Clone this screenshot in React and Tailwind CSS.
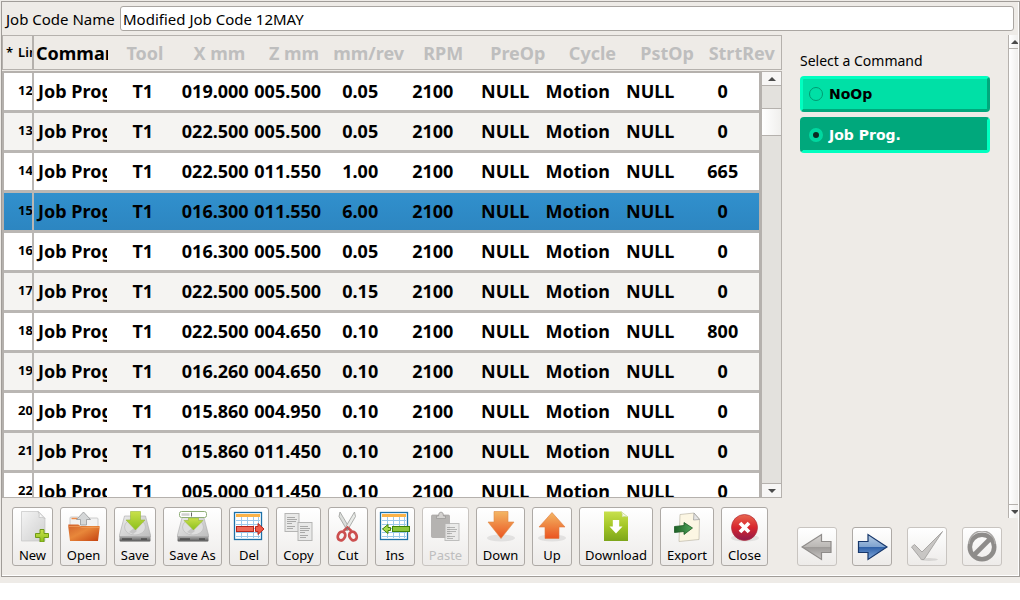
import { useState } from "react";

const headers = ["Tool", "X mm", "Z mm", "mm/rev", "RPM", "PreOp", "Cycle", "PstOp", "StrtRev"];

const rows = [
  { line: 12, x: "019.000", z: "005.500", feed: "0.05", start: "0" },
  { line: 13, x: "022.500", z: "005.500", feed: "0.05", start: "0" },
  { line: 14, x: "022.500", z: "011.550", feed: "1.00", start: "665" },
  { line: 15, x: "016.300", z: "011.550", feed: "6.00", start: "0" },
  { line: 16, x: "016.300", z: "005.500", feed: "0.05", start: "0" },
  { line: 17, x: "022.500", z: "005.500", feed: "0.15", start: "0" },
  { line: 18, x: "022.500", z: "004.650", feed: "0.10", start: "800" },
  { line: 19, x: "016.260", z: "004.650", feed: "0.10", start: "0" },
  { line: 20, x: "015.860", z: "004.950", feed: "0.10", start: "0" },
  { line: 21, x: "015.860", z: "011.450", feed: "0.10", start: "0" },
  { line: 22, x: "005.000", z: "011.450", feed: "0.10", start: "0" },
];

/* Shared gradients for the icons */
const Gradients = () => (
  <svg width="0" height="0" className="absolute" aria-hidden="true">
    <defs>
      <linearGradient id="paper" x1="0" y1="0" x2="1" y2="1">
        <stop offset="0" stopColor="#f4f4f4" />
        <stop offset="1" stopColor="#cfcfcf" />
      </linearGradient>
      <linearGradient id="green" x1="0" y1="0" x2="0" y2="1">
        <stop offset="0" stopColor="#c9e04a" />
        <stop offset="1" stopColor="#8cc01c" />
      </linearGradient>
      <linearGradient id="folder" x1="0" y1="0" x2="1" y2="1">
        <stop offset="0" stopColor="#d2622c" />
        <stop offset="0.45" stopColor="#e8873a" />
        <stop offset="1" stopColor="#c4410f" />
      </linearGradient>
      <linearGradient id="metal" x1="0" y1="0" x2="1" y2="1">
        <stop offset="0" stopColor="#ececec" />
        <stop offset="1" stopColor="#bdbdbd" />
      </linearGradient>
      <linearGradient id="front" x1="0" y1="0" x2="0" y2="1">
        <stop offset="0" stopColor="#b5b5b5" />
        <stop offset="1" stopColor="#555" />
      </linearGradient>
      <linearGradient id="orange" x1="0" y1="0" x2="0" y2="1">
        <stop offset="0" stopColor="#f3b664" />
        <stop offset="1" stopColor="#ea5420" />
      </linearGradient>
      <linearGradient id="lime" x1="0" y1="0" x2="0" y2="1">
        <stop offset="0" stopColor="#c8e04c" />
        <stop offset="0.5" stopColor="#a3c626" />
        <stop offset="1" stopColor="#7da51a" />
      </linearGradient>
      <linearGradient id="red" x1="0" y1="0" x2="0" y2="1">
        <stop offset="0" stopColor="#e8664f" />
        <stop offset="0.5" stopColor="#d8262d" />
        <stop offset="1" stopColor="#8e1a4c" />
      </linearGradient>
      <linearGradient id="leaf" x1="0" y1="0" x2="1" y2="0">
        <stop offset="0" stopColor="#1f6127" />
        <stop offset="1" stopColor="#4fa65a" />
      </linearGradient>
      <linearGradient id="blue" x1="0" y1="0" x2="0" y2="1">
        <stop offset="0" stopColor="#b9cfe6" />
        <stop offset="0.49" stopColor="#7fa3cf" />
        <stop offset="0.5" stopColor="#2d5fa6" />
        <stop offset="1" stopColor="#86ade0" />
      </linearGradient>
      <linearGradient id="gray" x1="0" y1="0" x2="0" y2="1">
        <stop offset="0" stopColor="#d6d4d2" />
        <stop offset="0.49" stopColor="#bbb8b5" />
        <stop offset="0.5" stopColor="#9c9997" />
        <stop offset="1" stopColor="#c9c6c4" />
      </linearGradient>
    </defs>
  </svg>
);

const Icon = ({ children }) => (
  <svg viewBox="0 0 32 32" className="size-8 shrink-0" fill="none" aria-hidden="true">
    {children}
  </svg>
);

const Drive = () => (
  <>
    <path d="M5.500 6h21l5 19v2H.5v-2z" fill="url(#metal)" stroke="#a9a9a9" strokeWidth="0.6" />
    <ellipse cx="16" cy="17" rx="10.500" ry="8" fill="#dedede" stroke="#bcbcbc" strokeWidth="0.7" />
    <path d="M10 22l5-4 3 3-4 3z" fill="#c6c6c6" />
    <path d="M.5 26h31v4.500q0 1-1 1h-29q-1 0-1-1z" fill="url(#front)" />
    <path d="M3 29h10M22 29h6" stroke="#333" strokeWidth="1" />
  </>
);

const Sheet = ({ x, y, w, h }) => (
  <g>
    <rect x={x} y={y} width={w} height={h} fill="#e9e9e8" stroke="#b5b5b4" />
    <path
      d={`M${x + 2} ${y + 4}h8M${x + 2} ${y + 6}h10M${x + 2} ${y + 8}h9M${x + 2} ${y + 10}h5M${x + 2} ${y + 13}h8M${x + 2} ${y + 15}h6`}
      stroke="#a9a9a8"
      strokeWidth="1"
    />
  </g>
);

const Grid = () => (
  <>
    <rect x="1.500" y="2.500" width="27" height="27" fill="#fff" stroke="#1d71a8" strokeWidth="1.300" />
    <rect x="3" y="4" width="24" height="3" fill="#fbb347" />
    <path
      d="M3 10.500h24M3 14.500h24M3 18.500h24M3 22.500h24M3 26.500h24M8.500 7v21M14.500 7v21M20.500 7v21M25.500 7v21"
      stroke="#9cc9ea"
      strokeWidth="1"
    />
  </>
);

const Shadow = () => <ellipse cx="16" cy="28" rx="14" ry="3.500" fill="#000" opacity="0.08" />;

const icons = {
  New: (
    <>
      <path d="M4.500 1.500h17l6.500 7v22.500H4.500z" fill="url(#paper)" stroke="#c4c4c4" strokeWidth="0.7" />
      <path d="M21 1.500l7 7q-3-2-6-1 1-3-1-6z" fill="#fafafa" stroke="#bdbdbd" strokeWidth="0.7" />
      <path d="M23 19.500h4v4h4.500v4H27v4.500h-4v-4.500h-4.500v-4H23z" fill="url(#green)" stroke="#6f9a17" />
    </>
  ),
  Open: (
    <>
      <path d="M2 8q0-1 1-1h7l1 1h18q1 0 1 1v8H2z" fill="#f2f2f2" stroke="#c2c2c2" strokeWidth="0.8" />
      <path d="M3.500 8.500h6" stroke="#ef8c4a" strokeWidth="1.500" />
      <path d="M.3 14.500h10l2 1.500h19.300v2L30 31H2L.3 17z" fill="url(#folder)" />
      <path d="M.6 16.500h11l2 1h17.500" stroke="#f0a060" strokeWidth="0.7" />
      <path d="M15.500 2l7 7.500h-4V15h-6V9.500h-4z" fill="#d5d7d8" stroke="#969899" strokeWidth="0.8" />
    </>
  ),
  Save: (
    <>
      <Drive />
      <path d="M11.500 1.500h10V10H26L16.500 20 7 10h4.500z" fill="url(#green)" stroke="#9ab83c" strokeWidth="0.6" />
    </>
  ),
  "Save As": (
    <>
      <Drive />
      <path d="M11.500 8h10v2.500H26L16.500 20 7 10.500h4.500z" fill="url(#green)" stroke="#9ab83c" strokeWidth="0.6" />
      <rect x="2.500" y="1.500" width="27" height="6" rx="2" fill="#fff" stroke="#8fae77" />
      <rect x="4.500" y="3.300" width="8" height="2.500" fill="#d0d0d0" />
      <path d="M14.500 2.500v4" stroke="#666" />
    </>
  ),
  Del: (
    <>
      <Grid />
      <rect x="3.500" y="16.500" width="17" height="5" fill="#ef6a58" stroke="#b8261b" />
      <path d="M22.500 16.500h2.500v-3l6 5.500-6 5.500v-3h-2.500z" fill="#ef5a48" stroke="#b8261b" />
    </>
  ),
  Copy: (
    <>
      <Sheet x={2} y={3.5} w={14} h={18} />
      <Sheet x={15} y={12.5} w={14} h={18} />
    </>
  ),
  Cut: (
    <>
      <path d="M8 2l9.500 16-2 3L7 6.500z" fill="#dcdedb" stroke="#9a9c99" strokeWidth="0.8" />
      <path d="M22.500 2L13 18l2 3 8.500-14.500z" fill="#e9ebe8" stroke="#9a9c99" strokeWidth="0.8" />
      <ellipse cx="9.500" cy="26" rx="3.500" ry="4.500" transform="rotate(25 9.500 26)" stroke="#cc4f4f" strokeWidth="2.800" />
      <ellipse cx="21" cy="26" rx="3.500" ry="4.500" transform="rotate(-25 21 26)" stroke="#cc4f4f" strokeWidth="2.800" />
      <path d="M11.500 21l4-3.500 4 3.500" stroke="#cc4f4f" strokeWidth="2.500" />
      <circle cx="15.500" cy="18.500" r="1" fill="#777" />
    </>
  ),
  Ins: (
    <>
      <Grid />
      <rect x="13.500" y="16.500" width="17" height="5" fill="#8cc63c" stroke="#3f8206" />
      <path d="M11.500 17.500H9v-3L3.500 19 9 23.500v-3h2.500z" fill="#a8dc4c" stroke="#3f8206" />
    </>
  ),
  Paste: (
    <>
      <rect x="1.500" y="5" width="18" height="22.500" rx="1" fill="#b5b3b1" stroke="#a6a4a2" strokeWidth="0.7" />
      <path d="M6.500 8.500V6h2q0-4 2.500-4t2.500 4h2v2.500z" fill="#d4d2d0" stroke="#9d9b99" strokeWidth="0.8" />
      <g opacity="0.85">
        <Sheet x={15} y={13.5} w={14} h={17} />
      </g>
    </>
  ),
  Down: (
    <>
      <Shadow />
      <path d="M9 1.500h14V12h6L16 28.500 3 12h6z" fill="url(#orange)" stroke="#df8a45" strokeWidth="0.6" />
    </>
  ),
  Up: (
    <>
      <Shadow />
      <path d="M16 2.500L29 17h-6v11.500H9V17H3z" fill="url(#orange)" stroke="#df7a40" strokeWidth="0.6" />
    </>
  ),
  Download: (
    <>
      <path d="M4 1.500h17l7 5.500v24H4z" fill="url(#lime)" />
      <path d="M21 1.500l7 5.500q-4-1-6 0 1-3-1-5.500z" fill="#f3f6e4" stroke="#b9cc76" strokeWidth="0.5" />
      <path d="M12.800 10h6.400v6.500H22.500L16 23.500 9.500 16.500h3.300z" fill="#fff" />
    </>
  ),
  Export: (
    <>
      <path d="M9 4.500l14-1.500 5.500 6-.5 20.500L8 31.500z" fill="#fcf6e3" stroke="#bdb8a8" strokeWidth="0.7" />
      <path d="M23 3l5.500 6.500-6 .5z" fill="#e4e4e4" stroke="#9b9b9b" strokeWidth="0.7" />
      <path d="M3.500 16.500l9.500-1v-3l8.500 5.500-8.500 6.500v-3l-9.500 1z" fill="url(#leaf)" stroke="#1c5a25" strokeWidth="0.8" />
    </>
  ),
  Close: (
    <>
      <Shadow />
      <circle cx="15.500" cy="17.500" r="13" fill="url(#red)" stroke="#b02c3a" strokeWidth="0.7" />
      <path d="M11 13l9 9M20 13l-9 9" stroke="#fff" strokeWidth="3.800" />
    </>
  ),
};

const tools = [
  { name: "New", width: "w-[41px]" },
  { name: "Open", width: "w-[47px]" },
  { name: "Save", width: "w-[42px]" },
  { name: "Save As", width: "w-[59px]" },
  { name: "Del", width: "w-[40px]" },
  { name: "Copy", width: "w-[45px]" },
  { name: "Cut", width: "w-[40px]" },
  { name: "Ins", width: "w-[40px]" },
  { name: "Paste", width: "w-[47px]", disabled: true },
  { name: "Down", width: "w-[49px]" },
  { name: "Up", width: "w-[40px]" },
  { name: "Download", width: "w-[74px]" },
  { name: "Export", width: "w-[54px]" },
  { name: "Close", width: "w-[47px]" },
];

const navButtons = [
  {
    name: "Previous",
    disabled: true,
    icon: <path d="M1 16L20.500 3.500v7H30v11h-9.500v7z" fill="url(#gray)" stroke="#8f8c8a" strokeWidth="1.200" />,
  },
  {
    name: "Next",
    icon: <path d="M31 16L12 3.500v7H2.500v11H12v7z" fill="url(#blue)" stroke="#17376b" strokeWidth="1.200" />,
  },
  {
    name: "Accept",
    disabled: true,
    icon: (
      <>
        <ellipse cx="18" cy="28.500" rx="9" ry="1.500" fill="#000" opacity="0.1" />
        <path d="M.5 16l3-2.500 7.500 7.500L31.500.5 13 28.500h-2.500z" fill="#c8c6c4" stroke="#a9a7a5" />
      </>
    ),
  },
  {
    name: "Cancel",
    disabled: true,
    icon: (
      <>
        <circle cx="16" cy="16" r="12.200" stroke="#8e8c8a" strokeWidth="4.600" />
        <path d="M8 24L24 8" stroke="#8e8c8a" strokeWidth="4.600" />
        <path d="M3 13a13 13 0 0 1 26 0" stroke="#aaa8a6" strokeWidth="1.500" />
      </>
    ),
  },
];

const Triangle = ({ down }) => (
  <svg viewBox="0 0 8 4" className="h-1 w-2 shrink-0" fill="#4b4b4b" aria-hidden="true">
    <path d={down ? "M0 0h8L4 4z" : "M0 4h8L4 0z"} />
  </svg>
);

const Columns = () => (
  <colgroup>
    <col className="w-[30px]" />
    <col span={10} />
  </colgroup>
);

const JobTable = ({ selected, onSelect }) => (
  <>
    <div className="h-[35px] shrink-0 border border-[#b5b1ad] pr-[2px]">
      <table className="h-full w-full table-fixed border-collapse text-lg font-bold text-[#bebebe]">
        <Columns />
        <thead>
          <tr>
            <th className="border-r-2 border-[#b5b1ad] p-0 pl-[3px] text-[13px] font-semibold text-black">
              <div className="flex gap-[5px] overflow-hidden">
                <span>*</span>
                <span>Line</span>
              </div>
            </th>
            <th className="p-0 text-left text-black">
              <div className="overflow-hidden pl-[2px] leading-6">Command</div>
            </th>
            {headers.map((header) => (
              <th key={header} className="p-0 leading-6 whitespace-nowrap">
                {header}
              </th>
            ))}
          </tr>
        </thead>
      </table>
    </div>

    <div className="mt-px flex min-h-0 flex-1 border-b border-[#b5b1ad]">
      <div className="min-w-0 flex-1 overflow-hidden border-x-2 border-t-2 border-[#b5b1ad]">
        <table className="w-full table-fixed border-separate border-spacing-0 text-lg font-bold text-black">
          <Columns />
          <tbody>
            {rows.map((row) => (
              <tr
                key={row.line}
                onClick={() => onSelect(row.line)}
                className={
                  row.line === selected
                    ? "h-10 bg-linear-to-b from-[#3190cd] to-[#2c85c0] text-center"
                    : "h-10 bg-white text-center even:bg-[#f5f4f2]"
                }
              >
                <td className="border-r-2 border-b-3 border-[#bab7b4] p-0 pb-[2px] text-left text-[13px]">
                  <div className="overflow-hidden pl-[14px]">{row.line}</div>
                </td>
                <td className="border-b-3 border-[#bab7b4] p-0 pb-[2px] text-left">
                  <div className="overflow-hidden pt-px pl-1 leading-6 whitespace-nowrap">Job Prog.</div>
                </td>
                {["T1", row.x, row.z, row.feed, "2100", "NULL", "Motion", "NULL", row.start].map((value, i) => (
                  <td key={i} className="border-b-3 border-[#bab7b4] p-0 pb-[2px] leading-6">
                    {value}
                  </td>
                ))}
              </tr>
            ))}
          </tbody>
        </table>
      </div>

      {/* Table scrollbar */}
      <div className="flex w-[21px] shrink-0 flex-col border border-b-0 border-[#b5b1ad] bg-[#e3e1dd]">
        <div className="flex h-[14px] items-center justify-center border-b border-[#b5b1ad] bg-[#f7f6f5]">
          <Triangle />
        </div>
        <div className="mt-[22px] h-7 border-y border-[#b5b1ad] bg-linear-to-r from-white to-[#f0efed]" />
        <div className="mt-auto flex h-[14px] items-center justify-center border-t border-[#b5b1ad] bg-[#f7f6f5]">
          <Triangle down />
        </div>
      </div>
    </div>
  </>
);

const Toolbar = () => (
  <div className="flex gap-[7px] pt-[9px] pb-[10px] pl-[10px]">
    {tools.map((tool) => (
      <button
        key={tool.name}
        type="button"
        disabled={tool.disabled}
        className={`${tool.width} flex h-[59px] shrink-0 flex-col items-center rounded-[3px] border border-[#aeaaa6] bg-linear-to-b from-white to-[#edebe9] pt-[2px] text-[13px] leading-[18px] whitespace-nowrap text-black disabled:border-[#c8c4c0] disabled:text-[#bebebe]`}
      >
        <Icon>{icons[tool.name]}</Icon>
        <span className="pt-1">{tool.name}</span>
      </button>
    ))}
  </div>
);

const CommandPanel = () => {
  const [command, setCommand] = useState("Job Prog.");

  return (
    <div className="flex w-[237px] shrink-0 flex-col">
      <div className="flex min-h-0 flex-1">
        <fieldset className="flex flex-1 flex-col gap-[5px] pt-4 pl-[18px]">
          <legend className="float-left text-sm leading-5 text-black">Select a Command</legend>
          {["NoOp", "Job Prog."].map((name) => (
            <label
              key={name}
              className={
                command === name
                  ? "flex h-9 w-[190px] items-center gap-[6px] rounded-[4px] border-3 border-t-[#00a87c] border-r-[#00ffc0] border-b-[#00ffc0] border-l-[#00a87c] bg-[#00a87c] pl-[6px] text-white"
                  : "flex h-9 w-[190px] items-center gap-[6px] rounded-[4px] border-3 border-t-[#00ffc0] border-r-[#00a87c] border-b-[#00a87c] border-l-[#00ffc0] bg-[#00e0a6] pl-[6px] text-black"
              }
            >
              <input
                type="radio"
                name="command"
                checked={command === name}
                onChange={() => setCommand(name)}
                className="size-[14px] appearance-none rounded-full border border-[#009b73] bg-[#00e0a6] checked:border-4 checked:border-[#00d8a0] checked:bg-[#0b2b22]"
              />
              <span className="font-['DejaVu_Sans',sans-serif] text-sm font-bold">{name}</span>
            </label>
          ))}
        </fieldset>

        {/* Panel scrollbar */}
        <div className="mr-px flex w-[10px] shrink-0 flex-col overflow-hidden border-l border-[#b5b1ad] bg-linear-to-r from-white to-[#f0efed]">
          <div className="flex h-[14px] items-center border-b border-[#b5b1ad] pl-[2px]">
            <Triangle />
          </div>
          <div className="mt-auto flex h-[14px] items-center border-t border-[#b5b1ad] pl-[2px]">
            <Triangle down />
          </div>
        </div>
      </div>

      <div className="flex gap-[15px] pt-[9px] pb-[10px] pl-[15px]">
        {navButtons.map((button) => (
          <button
            key={button.name}
            type="button"
            aria-label={button.name}
            disabled={button.disabled}
            className="flex h-[39px] w-10 items-center justify-center rounded-[3px] border border-[#aeaaa6] bg-linear-to-b from-white to-[#edebe9] disabled:border-[#c8c4c0]"
          >
            <Icon>{button.icon}</Icon>
          </button>
        ))}
      </div>
    </div>
  );
};

export default function App() {
  const [jobName, setJobName] = useState("Modified Job Code 12MAY");
  const [selected, setSelected] = useState(15);

  return (
    <div className="flex h-screen flex-col overflow-hidden bg-white pb-[17px] font-['Noto_Sans',sans-serif]">
      <Gradients />
      <div className="flex min-h-0 flex-1 flex-col bg-[#eeebe7] pt-px pb-[6px] pl-px">
        <div className="flex min-h-0 flex-1 flex-col border border-[#a09c98] shadow-[inset_-1px_-1px_0_#fff]">
          <div className="flex items-center gap-[6px] pt-1 pr-[5px] pb-1 pl-1">
            <label htmlFor="job-name" className="w-[108px] shrink-0 text-[15px] leading-5 whitespace-nowrap text-black">
              Job Code Name
            </label>
            <input
              id="job-name"
              type="text"
              value={jobName}
              onChange={(e) => setJobName(e.target.value)}
              className="h-[25px] min-w-0 flex-1 rounded-[3px] border border-[#aaa6a2] bg-white px-[2px] text-[15px] leading-5 text-black"
            />
          </div>

          <div className="flex min-h-0 flex-1">
            <div className="flex min-w-0 flex-1 flex-col">
              <JobTable selected={selected} onSelect={setSelected} />
              <Toolbar />
            </div>
            <CommandPanel />
          </div>
        </div>
      </div>
    </div>
  );
}
